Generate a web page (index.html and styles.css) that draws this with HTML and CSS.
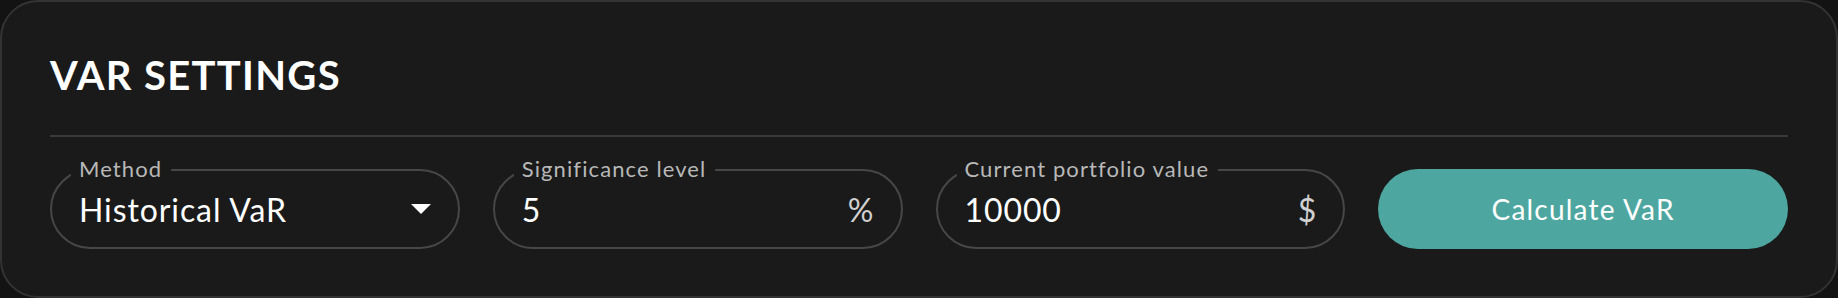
FILE: index.html
```html
<!DOCTYPE html>
<html>
  <head>
    <title>VaR Settings</title>
    <link rel="stylesheet" href="styles.css">
  </head>
  <body>
    <div class="card">
      <div class="title">VAR SETTINGS</div>
      <div class="divider"></div>
      <div class="form-row">
        <div class="field">
          <span class="label">Method</span>
          <span class="value">Historical VaR</span>
          <svg class="caret" width="20" height="10" viewBox="0 0 20 10">
            <polygon points="0,0 20,0 10,10" fill="#fff" />
          </svg>
        </div>
        <div class="field">
          <span class="label">Significance level</span>
          <span class="value">5</span>
          <span class="suffix">%</span>
        </div>
        <div class="field">
          <span class="label">Current portfolio value</span>
          <span class="value">10000</span>
          <span class="suffix">$</span>
        </div>
        <button class="calc-btn">Calculate VaR</button>
      </div>
    </div>
  </body>
</html>
```

FILE: styles.css
```css
body {
  margin: 0;
  padding: 0;
  background-color: #131313;
  font-family: Lato, "Open Sans", sans-serif;
  color: white;
}
.card {
  box-sizing: border-box;
  width: 1838px;
  height: 298px;
  padding: 49px 48px 0;
  background-color: #1a1a1a;
  border: 2px solid #333;
  border-radius: 38px;
}
.title {
  font-size: 40px;
  font-weight: 700;
  line-height: 48px;
  letter-spacing: 1.3px;
}
.divider {
  height: 2px;
  margin-top: 36px;
  background-color: #3a3a3a;
}
.form-row {
  display: grid;
  grid-template-columns: repeat(4, 1fr);
  gap: 33px;
  margin-top: 32px;
}
.field {
  position: relative;
  box-sizing: border-box;
  height: 80px;
  padding: 0 27px 0 27px;
  border: 2px solid #474747;
  border-radius: 40px;
  display: flex;
  align-items: center;
  justify-content: space-between;
}
.label {
  position: absolute;
  top: -14px;
  left: 19px;
  padding: 0 9px 0 8px;
  background-color: #1a1a1a;
  font-size: 22px;
  line-height: 24px;
  letter-spacing: 1.1px;
  color: #b8b8b8;
}
.value {
  font-size: 32px;
  letter-spacing: 0.9px;
  color: #fff;
}
.suffix {
  font-size: 32px;
  color: #d0d0d0;
}
.caret {
  display: block;
}
.calc-btn {
  height: 80px;
  border: none;
  border-radius: 40px;
  background-color: #4da7a0;
  color: #fff;
  font-family: Lato, "Open Sans", sans-serif;
  font-size: 28px;
  letter-spacing: 1.2px;
  cursor: pointer;
}
```
